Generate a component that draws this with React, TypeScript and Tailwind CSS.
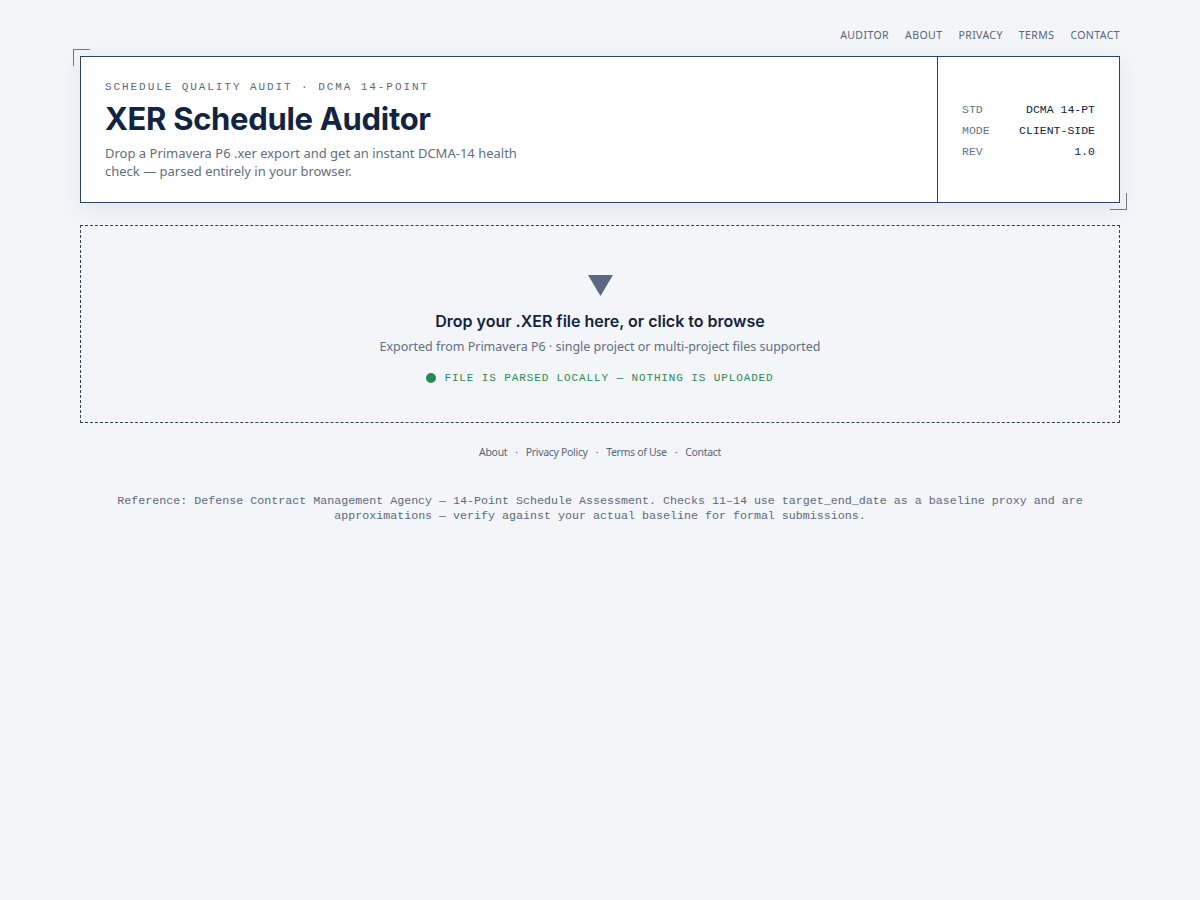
import React from "react";

const mono = { fontFamily: '"Liberation Mono", "DejaVu Sans Mono", monospace' };
const sans = { fontFamily: '"Noto Sans", Inter, sans-serif' };
const head = { fontFamily: 'Inter, "Noto Sans", sans-serif' };

export default function App() {
  return (
    <div className="min-h-[900px] w-full bg-[#f4f5f9]" style={sans}>
      <div className="mx-auto w-[1040px]">
        <nav className="flex justify-end gap-4 pt-[28px] pb-[14px] text-[10.5px] leading-[14px] tracking-[0.04em] text-[#56657a]">
          <span>AUDITOR</span>
          <span>ABOUT</span>
          <span>PRIVACY</span>
          <span>TERMS</span>
          <span>CONTACT</span>
        </nav>

        <div className="relative">
          <div className="absolute -left-[7px] -top-[7px] h-[17px] w-[17px] border-l border-t border-[#6b7a8f]" />
          <div className="absolute -right-[7px] -bottom-[7px] h-[17px] w-[17px] border-r border-b border-[#6b7a8f]" />
          <div className="flex h-[147px] border border-[#2b4361] bg-white shadow-[0_6px_24px_rgba(20,40,70,0.08)]">
            <div className="flex-1 pl-[24px] pt-[22px]">
              <div className="text-[11px] leading-[16px] tracking-[0.175em] text-[#5b6a7e]" style={mono}>
                SCHEDULE QUALITY AUDIT · DCMA 14-POINT
              </div>
              <h1 className="mt-[5px] text-[31px] font-bold leading-[38px] tracking-[-0.01em] text-[#12243f]" style={head}>
                XER Schedule Auditor
              </h1>
              <p className="mt-[6px] max-w-[440px] text-[13px] leading-[18px] text-[#5f6e82]">
                Drop a Primavera P6 .xer export and get an instant DCMA-14 health check — parsed entirely in your browser.
              </p>
            </div>
            <div className="flex w-[182px] flex-col justify-center gap-[6px] border-l border-[#2b4361] px-[24px] pt-[2px] text-[11.5px] leading-[15px]" style={mono}>
              <div className="flex justify-between">
                <span className="text-[#66758a]">STD</span>
                <span className="text-[#12243f]">DCMA 14-PT</span>
              </div>
              <div className="flex justify-between">
                <span className="text-[#66758a]">MODE</span>
                <span className="text-[#12243f]">CLIENT-SIDE</span>
              </div>
              <div className="flex justify-between">
                <span className="text-[#66758a]">REV</span>
                <span className="text-[#12243f]">1.0</span>
              </div>
            </div>
          </div>
        </div>

        <div className="mt-[22px] flex h-[198px] flex-col items-center border border-dashed border-[#2b4361] pt-[49px]">
          <svg width="25" height="21" viewBox="0 0 25 21">
            <polygon points="0,0 25,0 12.5,21" fill="#596a80" />
          </svg>
          <div className="mt-[14px] text-[16px] font-semibold leading-[22px] text-[#12243f]" style={head}>
            Drop your .XER file here, or click to browse
          </div>
          <div className="mt-[6px] text-[12.5px] leading-[18px] text-[#5f6e82]">
            Exported from Primavera P6 · single project or multi-project files supported
          </div>
          <div className="mt-[15px] flex items-center gap-[8px]">
            <span className="h-[10px] w-[10px] rounded-full bg-[#2a8a55]" />
            <span className="text-[11px] leading-[14px] tracking-[0.08em] text-[#2a8a55]" style={mono}>
              FILE IS PARSED LOCALLY — NOTHING IS UPLOADED
            </span>
          </div>
        </div>

        <div className="mt-[22px] flex justify-center gap-[8px] text-[10.5px] leading-[14px] tracking-[-0.03em] text-[#56657a]">
          <span>About</span>
          <span>·</span>
          <span>Privacy Policy</span>
          <span>·</span>
          <span>Terms of Use</span>
          <span>·</span>
          <span>Contact</span>
        </div>

        <p className="mt-[35px] text-center text-[11.66px] leading-[15px] text-[#5b6a7e]" style={mono}>
          Reference: Defense Contract Management Agency — 14-Point Schedule Assessment. Checks 11–14 use target_end_date as a baseline proxy and are approximations — verify against your actual baseline for formal submissions.
        </p>
      </div>
    </div>
  );
}
